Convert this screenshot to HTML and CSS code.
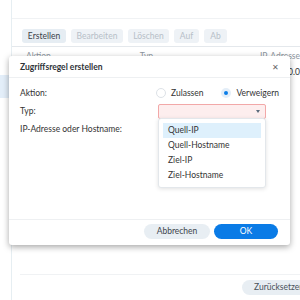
FILE: index.html
```html
<!DOCTYPE html>
<html lang="de">
   <head>
      <title>Zugriffsregel erstellen</title>
      <meta charset="UTF-8">
      <link rel="stylesheet" href="styles.css">
   </head>
   <body>
      <div class="app">
         <div class="side">
            <div class="side-item"></div>
            <div class="side-item selected"></div>
         </div>
         <div class="main">
            <div class="topbar"></div>
            <div class="toolbar">
               <span class="tbtn create">Erstellen</span>
               <span class="tbtn off edit">Bearbeiten</span>
               <span class="tbtn off del">Löschen</span>
               <span class="tbtn off up">Auf</span>
               <span class="tbtn off down">Ab</span>
            </div>
            <div class="thead">
               <span class="col1">Aktion</span>
               <span class="col2">Typ</span>
               <span class="col3">IP-Adresse</span>
            </div>
            <div class="trow">
               <span class="col1"></span>
               <span class="col2"></span>
               <span class="col3">0.0.0.0</span>
            </div>
            <div class="spacer"></div>
            <div class="pagefoot">
               <span class="reset">Zurücksetzen</span>
            </div>
         </div>
      </div>

      <div class="dialog">
         <div class="dlg-head">
            <span>Zugriffsregel erstellen</span>
            <span class="close">✕</span>
         </div>
         <div class="dlg-body">
            <div class="row">
               <label>Aktion:</label>
               <div class="radios">
                  <span class="radio"><i class="dot"></i>Zulassen</span>
                  <span class="radio"><i class="dot on"></i>Verweigern</span>
               </div>
            </div>
            <div class="row">
               <label>Typ:</label>
               <div class="select"><span class="arrow"></span></div>
            </div>
            <div class="row">
               <label>IP-Adresse oder Hostname:</label>
            </div>
         </div>
         <div class="dlg-foot">
            <span class="btn">Abbrechen</span>
            <span class="btn primary">OK</span>
         </div>
         <ul class="menu">
            <li class="hover">Quell-IP</li>
            <li>Quell-Hostname</li>
            <li>Ziel-IP</li>
            <li>Ziel-Hostname</li>
         </ul>
      </div>
   </body>
</html>
```

FILE: styles.css
```css
*
{ box-sizing:border-box;}
html, body
{ margin:0;
  height:100%;
  background-color:#fff;
  overflow:hidden;
  font-family:Lato, "Open Sans", sans-serif;
  font-size:8.5px;
  color:#333;}
.app
{ display:flex;
  height:300px;}
.side
{ width:12px;
  border-right:1px solid #e6eef2;
  padding-top:52px;}
.side-item
{ height:23px;}
.side-item.selected
{ background-color:#e3eef9;}
.main
{ flex:1;
  display:flex;
  flex-direction:column;
  min-width:0;}
.topbar
{ height:19px;
  border-bottom:1px solid #f0f2f4;}
.toolbar
{ display:flex;
  gap:5px;
  padding:10px 0 0 10px;
  height:27px;}
.tbtn
{ height:14px;
  line-height:14px;
  text-align:center;
  border-radius:3px;
  background-color:#e6edf3;
  color:#3a4149;
  white-space:nowrap;}
.tbtn.create
{ width:44px;}
.tbtn.edit
{ width:52px;}
.tbtn.del
{ width:41px;}
.tbtn.up
{ width:25px;}
.tbtn.down
{ width:23px;}
.tbtn.off
{ background-color:#eef2f6;
  color:#b7bfc8;}
.thead, .trow
{ display:flex;
  height:16px;
  line-height:16px;
  white-space:nowrap;}
.thead
{ border-top:1px solid #e4e8ec;
  height:18px;
  line-height:18px;
  color:#8c959e;}
.trow
{ color:#333;}
.col1
{ width:140px;
  padding-left:14px;}
.col2
{ width:131px;}
.col3
{ padding-left:2px;}
.trow .col3
{ padding-left:6px;}
.spacer
{ flex:1;}
.pagefoot
{ border-top:1px solid #f0f2f4;
  margin-left:8px;
  height:26px;
  display:flex;
  justify-content:flex-end;
  align-items:flex-start;
  padding-top:5px;}
.reset
{ height:15px;
  line-height:15px;
  padding:0 0 0 12px;
  width:60px;
  overflow:hidden;
  margin-right:-2px;
  border-radius:8px 0 0 8px;
  background-color:#e8eef3;
  color:#4a525a;
  white-space:nowrap;}

/* modal */
.dialog
{ position:absolute;
  left:9px;
  top:56px;
  width:281px;
  height:189px;
  background-color:#fff;
  border-radius:3px;
  box-shadow:0 2px 6px rgba(0, 0, 0, .35);
  display:flex;
  flex-direction:column;}
.dlg-head
{ height:22px;
  border-bottom:1px solid #eef0f2;
  display:flex;
  justify-content:space-between;
  align-items:center;
  padding:0 11px;
  font-weight:bold;
  color:#2e3338;}
.close
{ font-weight:normal;
  font-size:8px;
  color:#666;}
.dlg-body
{ flex:1;
  padding:6px 11px 0;}
.row
{ display:flex;
  align-items:center;
  min-height:18px;}
.row label
{ width:138px;}
.radios
{ display:flex;
  gap:18px;}
.radio
{ display:flex;
  align-items:center;
  gap:5px;}
.dot
{ width:10px;
  height:10px;
  border-radius:50%;
  border:1px solid #dde2e7;
  background-color:#fff;}
.dot.on
{ border:3px solid #e4eef8;
  background-color:#0a7de8;}
.select
{ width:108px;
  height:15px;
  border:1px solid #f2a8a8;
  background-color:#fdeeee;
  border-radius:2px;
  position:relative;}
.arrow
{ position:absolute;
  right:5px;
  top:5px;
  border-left:2.5px solid transparent;
  border-right:2.5px solid transparent;
  border-top:3px solid #5b6b7c;}
.dlg-foot
{ height:26px;
  border-top:1px solid #eef0f2;
  display:flex;
  justify-content:flex-end;
  align-items:center;
  gap:4px;
  padding:0 12px 2px;}
.btn
{ width:66px;
  height:15px;
  line-height:15px;
  text-align:center;
  border-radius:8px;
  background-color:#e8eef3;
  color:#3e454c;}
.btn.primary
{ width:64px;
  background-color:#0a7be6;
  color:#fff;}
.menu
{ position:absolute;
  left:149px;
  top:62px;
  width:108px;
  margin:0;
  padding:4px 4px;
  list-style:none;
  background-color:#fff;
  border:1px solid #e3e7eb;
  border-radius:3px;
  box-shadow:0 1px 4px rgba(0, 0, 0, .12);}
.menu li
{ height:15px;
  line-height:15px;
  padding-left:5px;}
.menu li.hover
{ background-color:#def0fc;}
```
